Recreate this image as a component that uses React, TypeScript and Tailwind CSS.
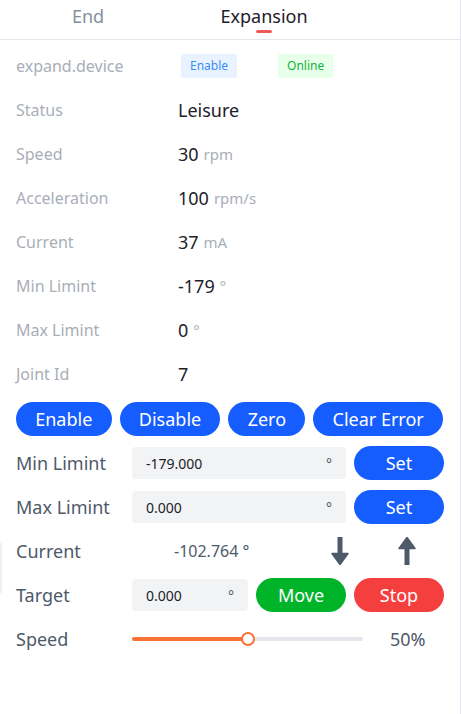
import React from 'react';

const font = { fontFamily: '"Noto Sans", "Liberation Sans", sans-serif' };

const info = [
  { label: 'Status', value: 'Leisure', unit: '' },
  { label: 'Speed', value: '30', unit: 'rpm' },
  { label: 'Acceleration', value: '100', unit: 'rpm/s' },
  { label: 'Current', value: '37', unit: 'mA' },
  { label: 'Min Limint', value: '-179', unit: '°' },
  { label: 'Max Limint', value: '0', unit: '°' },
  { label: 'Joint Id', value: '7', unit: '' },
];

const ArrowDown = () => (
  <svg width="18" height="28" viewBox="0 0 18 28" className="shrink-0">
    <rect x="6.5" y="0" width="5" height="18" fill="#4e5969" />
    <path d="M1 16.5 H17 L9 27.5 Z" fill="#4e5969" stroke="#4e5969" strokeWidth="1.5" strokeLinejoin="round" />
  </svg>
);

const ArrowUp = () => (
  <svg width="18" height="28" viewBox="0 0 18 28" className="shrink-0">
    <rect x="6.5" y="10" width="5" height="18" fill="#4e5969" />
    <path d="M1 11.5 H17 L9 0.5 Z" fill="#4e5969" stroke="#4e5969" strokeWidth="1.5" strokeLinejoin="round" />
  </svg>
);

const Field = ({ value, width }: { value: string; width: string }) => (
  <div className={`${width} h-[32px] rounded-[4px] bg-[#f2f3f5] flex items-center justify-between pl-[14px] pr-[14px] text-[14px] text-[#1d2129]`}>
    <span>{value}</span>
    <span className="text-[#4e5969]">°</span>
  </div>
);

export default function App() {
  return (
    <div style={font} className="relative w-[461px] h-[714px] bg-white border-r border-[#e5e6eb]">
      {/* tabs */}
      <div className="flex h-[40px] border-b border-[#e5e6eb]">
        <div className="w-[176px] flex flex-col items-center pt-[4px]">
          <span className="text-[18px] leading-[24px] text-[#86909c]">End</span>
        </div>
        <div className="w-[176px] flex flex-col items-center pt-[4px]">
          <span className="text-[18px] leading-[24px] text-[#1d2129]">Expansion</span>
          <span className="mt-[2px] w-[16px] h-[3px] rounded-full bg-[#f05a5a]" />
        </div>
      </div>

      {/* info */}
      <div className="pt-[4px] px-[16px]">
        <div className="h-[44px] flex items-center">
          <span className="w-[162px] text-[16px] text-[#a9aeb8]">expand.device</span>
          <span className="ml-[3px] h-[24px] px-[9px] flex items-center rounded-[2px] bg-[#e8f3ff] text-[12px] text-[#3c8cf5]">Enable</span>
          <span className="ml-[41px] h-[24px] px-[9px] flex items-center rounded-[2px] bg-[#e8ffea] text-[12px] text-[#14b33a]">Online</span>
        </div>
        {info.map(r => (
          <div key={r.label} className="h-[44px] flex items-center">
            <span className="w-[162px] text-[16px] text-[#a9aeb8]">{r.label}</span>
            <span className="text-[18px] text-[#1d2129]">{r.value}</span>
            {r.unit && <span className="ml-[5px] text-[15px] text-[#a9aeb8]">{r.unit}</span>}
          </div>
        ))}
      </div>

      {/* controls */}
      <div className="mt-[6px] px-[16px] w-[460px] flex flex-col gap-[10px]">
        <div className="flex gap-[8px] h-[34px] pr-[1px]">
          {['Enable', 'Disable', 'Zero', 'Clear Error'].map(b => (
            <button key={b} className="flex-auto h-[34px] rounded-full bg-[#165dff] text-white text-[18px] px-[12px]">{b}</button>
          ))}
        </div>

        <div className="flex items-center h-[34px]">
          <span className="w-[116px] text-[18px] text-[#4e5969]">Min Limint</span>
          <Field value="-179.000" width="w-[214px]" />
          <button className="ml-[8px] w-[90px] h-[34px] rounded-full bg-[#165dff] text-white text-[18px]">Set</button>
        </div>

        <div className="flex items-center h-[34px]">
          <span className="w-[116px] text-[18px] text-[#4e5969]">Max Limint</span>
          <Field value="0.000" width="w-[214px]" />
          <button className="ml-[8px] w-[90px] h-[34px] rounded-full bg-[#165dff] text-white text-[18px]">Set</button>
        </div>

        <div className="flex items-center h-[34px]">
          <span className="w-[116px] text-[18px] text-[#4e5969]">Current</span>
          <span className="w-[199px] pl-[42px] text-[16px] text-[#4e5969]">-102.764 °</span>
          <ArrowDown />
          <span className="ml-[49px]"><ArrowUp /></span>
        </div>

        <div className="flex items-center h-[34px]">
          <span className="w-[116px] text-[18px] text-[#4e5969]">Target</span>
          <Field value="0.000" width="w-[116px]" />
          <button className="ml-[8px] w-[90px] h-[34px] rounded-full bg-[#00b42a] text-white text-[18px]">Move</button>
          <button className="ml-[8px] w-[90px] h-[34px] rounded-full bg-[#f53f3f] text-white text-[18px]">Stop</button>
        </div>

        <div className="flex items-center h-[34px]">
          <span className="w-[116px] text-[18px] text-[#4e5969]">Speed</span>
          <div className="relative w-[231px] h-[4px] rounded-full bg-[#e5e6eb]">
            <div className="h-full rounded-full bg-[#f77234]" style={{ width: '50%' }} />
            <div className="absolute top-1/2 -translate-y-1/2 -translate-x-1/2 w-[14px] h-[14px] rounded-full bg-white border-2 border-[#f77234]" style={{ left: '50%' }} />
          </div>
          <span className="ml-[27px] text-[18px] text-[#4e5969]">50%</span>
        </div>
      </div>

      <div className="absolute left-0 top-[543px] w-[2px] h-[50px] bg-[#eef0f3]" />
    </div>
  );
}
